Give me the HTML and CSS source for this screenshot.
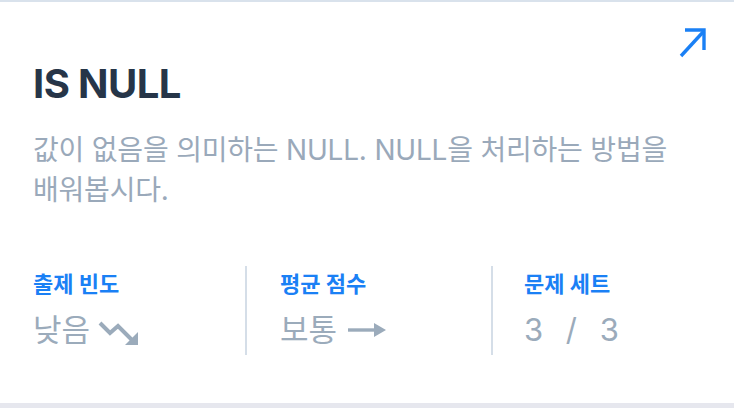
FILE: index.html
```html
<!DOCTYPE html>
<html lang="ko">
<head>
<meta charset="utf-8">
<title>IS NULL</title>
<link rel="stylesheet" href="styles.css">
</head>
<body>
<div class="page">
  <article class="card">
    <div class="card-top">
      <a class="open-link" href="#" aria-label="열기">
        <svg width="30" height="32" viewBox="0 0 30 32" fill="none" stroke="#1a80f5" stroke-width="3.4" stroke-linecap="butt">
          <path d="M3 30 L26 5"/>
          <path d="M7 4 H26 V24"/>
        </svg>
      </a>
    </div>
    <h1 class="title">IS NULL</h1>
    <p class="desc">값이 없음을 의미하는 NULL. NULL을 처리하는 방법을 배워봅시다.</p>
    <div class="stats">
      <div class="stat stat-first">
        <div class="stat-label">출제 빈도</div>
        <div class="stat-value">낮음
          <svg class="trend" width="42" height="26" viewBox="0 0 42 26" fill="none" stroke="#9babbb" stroke-width="4">
            <path d="M2 3 L12 13 L20 6 L34 20"/>
            <path d="M40 25 L40 12 L27 25 Z" fill="#9babbb" stroke="none"/>
          </svg>
        </div>
      </div>
      <div class="stat stat-mid">
        <div class="stat-label">평균 점수</div>
        <div class="stat-value">보통
          <svg class="flat" width="40" height="16" viewBox="0 0 40 16" fill="none">
            <path d="M1 8 H30" stroke="#9babbb" stroke-width="3.4"/>
            <path d="M27 1 L39 8 L27 15 Z" fill="#9babbb"/>
          </svg>
        </div>
      </div>
      <div class="stat stat-last">
        <div class="stat-label">문제 세트</div>
        <div class="stat-value nums">3 / 3</div>
      </div>
    </div>
  </article>
</div>
</body>
</html>
```
FILE: styles.css
```css
* { box-sizing: border-box; }
html, body { margin: 0; padding: 0; }
body {
  background: #e6e7ee;
  font-family: Inter, "Noto Sans CJK KR", sans-serif;
}
.page { width: 734px; height: 408px; }
.card {
  background: #ffffff;
  border-top: 2px solid #d9e2ec;
  height: 403px;
  padding: 24px 26px 0 33px;
}
.card-top {
  display: flex;
  justify-content: flex-end;
  height: 34px;
}
.open-link { display: block; width: 30px; height: 32px; }
.open-link svg { display: block; }
.title {
  margin: 0;
  font-size: 40px;
  line-height: 48px;
  font-weight: 700;
  color: #263548;
  letter-spacing: -0.6px;
}
.desc {
  margin: 22px 0 0 0;
  font-size: 28px;
  line-height: 40px;
  color: #9aa9ba;
  max-width: 660px;
  word-break: keep-all;
  letter-spacing: -0.2px;
}
.stats {
  display: flex;
  margin-top: 56px;
}
.stat {
  height: 89px;
  padding-top: 3px;
}
.stat-first { width: 212px; }
.stat-mid { width: 246px; border-left: 2px solid #d5dee8; padding-left: 33px; }
.stat-last { flex: 1; border-left: 2px solid #d5dee8; padding-left: 31px; }
.stat-label {
  font-size: 22px;
  line-height: 30px;
  font-weight: 700;
  color: #1a80f5;
}
.stat-value {
  margin-top: 12px;
  font-size: 31px;
  line-height: 38px;
  color: #9babbb;
  display: flex;
  align-items: center;
  gap: 8px;
}
.stat-mid .stat-value { gap: 10px; }
.trend { margin-top: 6px; }
.nums { word-spacing: 12px; letter-spacing: 1px; }
```
